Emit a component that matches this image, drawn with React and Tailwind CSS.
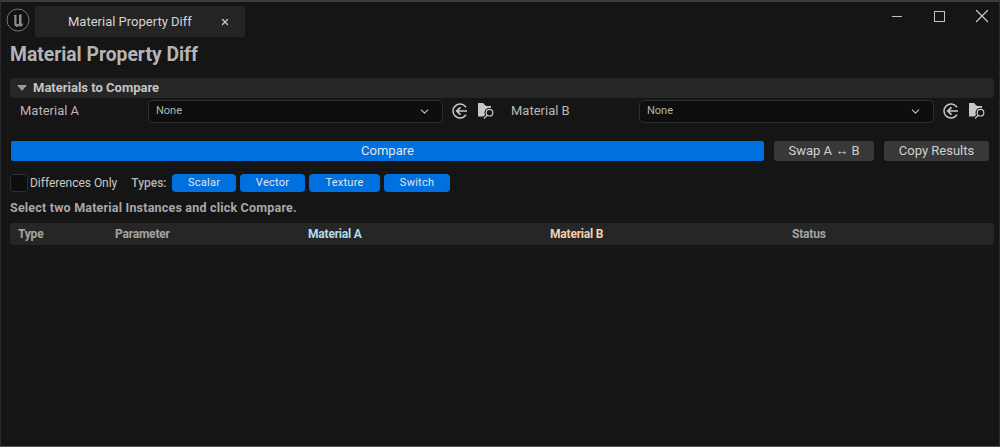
import React from "react";
import { ChevronDown, X } from "lucide-react";

const TYPE_CHIPS = [
  { label: "Scalar", width: "w-[64px]" },
  { label: "Vector", width: "w-[65px]" },
  { label: "Texture", width: "w-[71px]" },
  { label: "Switch", width: "w-[66px]" },
];

const UnrealLogo = () => (
  <svg width="24" height="24" viewBox="0 0 24 24" className="block">
    <circle cx="12" cy="12" r="11" fill="#111" stroke="#777" strokeWidth="1" />
    <path
      d="M7.500 7.500C9 6.500 10 6.500 10.500 6.800V15.500C10.500 16.500 12 16.500 13 15.800V7L15.500 5.800V15.500C16 16 16.700 16 17.500 15.300C16.800 17.200 15.500 18.500 14.500 19L13.200 17.800 11.500 19C9.500 18.800 8.300 17.800 8.300 16V8.500Z"
      fill="#8c8c8c"
    />
  </svg>
);

const BackIcon = () => (
  <svg width="16" height="16" viewBox="0 0 16 16" fill="none" className="block shrink-0">
    <path
      d="M13.600 3.800A7 7 0 1 0 13.600 12.200"
      stroke="#c8c8c8"
      strokeWidth="1.500"
      strokeLinecap="round"
    />
    <path d="M15 8H5M8.500 4.300 4.700 8l3.800 3.700" stroke="#c8c8c8" strokeWidth="1.700" />
  </svg>
);

const BrowseIcon = () => (
  <svg width="17" height="16" viewBox="0 0 17 16" fill="none" className="block shrink-0">
    <path d="M0 0H5L8 3H13V13.500H0Z" fill="#c8c8c8" />
    <circle cx="11.500" cy="9.700" r="5" fill="#151515" />
    <path d="M9 12 5.500 15.500" stroke="#151515" strokeWidth="3" />
    <circle cx="11.500" cy="9.700" r="3.300" stroke="#c8c8c8" strokeWidth="1.200" />
    <path d="M9 12.300 6 15.500" stroke="#c8c8c8" strokeWidth="1.200" />
  </svg>
);

const MaterialPicker = ({ label }) => (
  <div className="flex items-center">
    <span className="w-[128px] pb-[1px] text-[13px] text-[#b8b8b8]">{label}</span>
    <div className="flex h-[23px] w-[295px] items-center justify-between rounded-[4px] border border-[#2e2e2e] bg-[#0e0e0e] pl-[7px] pr-[11px]">
      <span className="text-[11px] text-[#b4b4b4]">None</span>
      <ChevronDown size={13} strokeWidth={2} className="text-[#c0c0c0]" />
    </div>
    <div className="ml-[9px] flex items-center gap-[10px]">
      <BackIcon />
      <BrowseIcon />
    </div>
  </div>
);

const App = () => {
  return (
    <div
      className="flex h-[447px] w-[1000px] flex-col overflow-hidden border-x border-b border-t-2 border-x-[#2a2a2e] border-b-[#55555f] border-t-[#3c3a44] bg-[#151515] text-[#c0c0c0]"
      style={{ fontFamily: "Roboto, 'Liberation Sans', sans-serif" }}
    >
      <div className="flex h-[35px] shrink-0 items-end">
        <div className="mb-[5px] ml-[5px] w-[29px]">
          <UnrealLogo />
        </div>
        <div className="flex h-[31px] w-[210px] items-center rounded-t-[3px] bg-[#242424] pl-[33px] text-[13px] text-[#d4d4d4]">
          <span>Material Property Diff</span>
          <X size={10} strokeWidth={3} className="ml-[28px] text-[#c8c8c8]" />
        </div>
        <div className="ml-auto flex h-full items-start text-[#c4c4c4]">
          <div className="mr-[32px] mt-[14px] h-px w-[10px] bg-[#c4c4c4]" />
          <div className="mr-[26px] mt-[9px] h-[11px] w-[11px] border border-[#c4c4c4]" />
          <X size={22} strokeWidth={1.400} className="mr-[6px] mt-[3px]" />
        </div>
      </div>

      <div className="flex h-[34px] shrink-0 items-center border-b border-[#1a1a1a] pl-[9px] pt-[3px] text-[19.300px] font-bold text-[#b4b4b4]">
        Material Property Diff
      </div>

      <div className="px-[9px] pt-[7px]">
        <div className="flex h-[20px] w-[984px] items-center rounded-[3px] bg-[#262626] pl-[7px] text-[13px] font-bold text-[#c4c4c4]">
          <span className="mr-[6px] h-0 w-0 border-x-[5px] border-t-[6px] border-x-transparent border-t-[#9a9a9a]" />
          Materials to Compare
        </div>

        <div className="mt-[1px] flex h-[24px] items-center pl-[10px]">
          <MaterialPicker label="Material A" />
          <div className="ml-[16px]">
            <MaterialPicker label="Material B" />
          </div>
        </div>

        <div className="mt-[18px] flex h-[20px] items-center text-[13px]">
          <button className="ml-[1px] h-full w-[753px] rounded-[2px] bg-[#0070e0] text-[#e4e4e4]">
            Compare
          </button>
          <button className="ml-[10px] h-full w-[100px] rounded-[3px] bg-[#383838] text-[#d0d0d0]">
            Swap A ↔ B
          </button>
          <button className="ml-[10px] h-full w-[105px] rounded-[3px] bg-[#383838] text-[#d0d0d0]">
            Copy Results
          </button>
        </div>

        <div className="mt-[13px] flex h-[18px] items-center">
          <div className="h-[18px] w-[18px] rounded-[3px] border border-[#2e2e2e] bg-[#0e0e0e]" />
          <span className="ml-[2px] text-[12px] tracking-[-0.02px] text-[#c8c8c8]">Differences Only</span>
          <span className="ml-[14px] text-[12px] font-medium text-[#b4b4b4]">Types:</span>
          <div className="ml-[5px] flex gap-[4px]">
            {TYPE_CHIPS.map((chip) => (
              <div
                key={chip.label}
                className={`${chip.width} flex h-[18px] items-center justify-center rounded-[4px] bg-[#0070e0] pl-[1px] text-[11px] tracking-[0.25px] text-[#e4e4e4]`}
              >
                {chip.label}
              </div>
            ))}
          </div>
        </div>

        <p className="mt-[9px] text-[12.500px] font-bold leading-[14px] tracking-[0.2px] text-[#a8a8a8]">
          Select two Material Instances and click Compare.
        </p>

        <div className="mt-[8px] flex h-[22px] w-[984px] items-center rounded-[3px] bg-[#262626] text-[12px] font-bold tracking-[-0.2px] text-[#a4a4a4]">
          <span className="w-[105px] pl-[8px]">Type</span>
          <span className="w-[193px]">Parameter</span>
          <span className="w-[242px] text-[#b4dcf0]">Material A</span>
          <span className="w-[242px] text-[#f5cfb0]">Material B</span>
          <span>Status</span>
        </div>
      </div>
    </div>
  );
};

export default App;
